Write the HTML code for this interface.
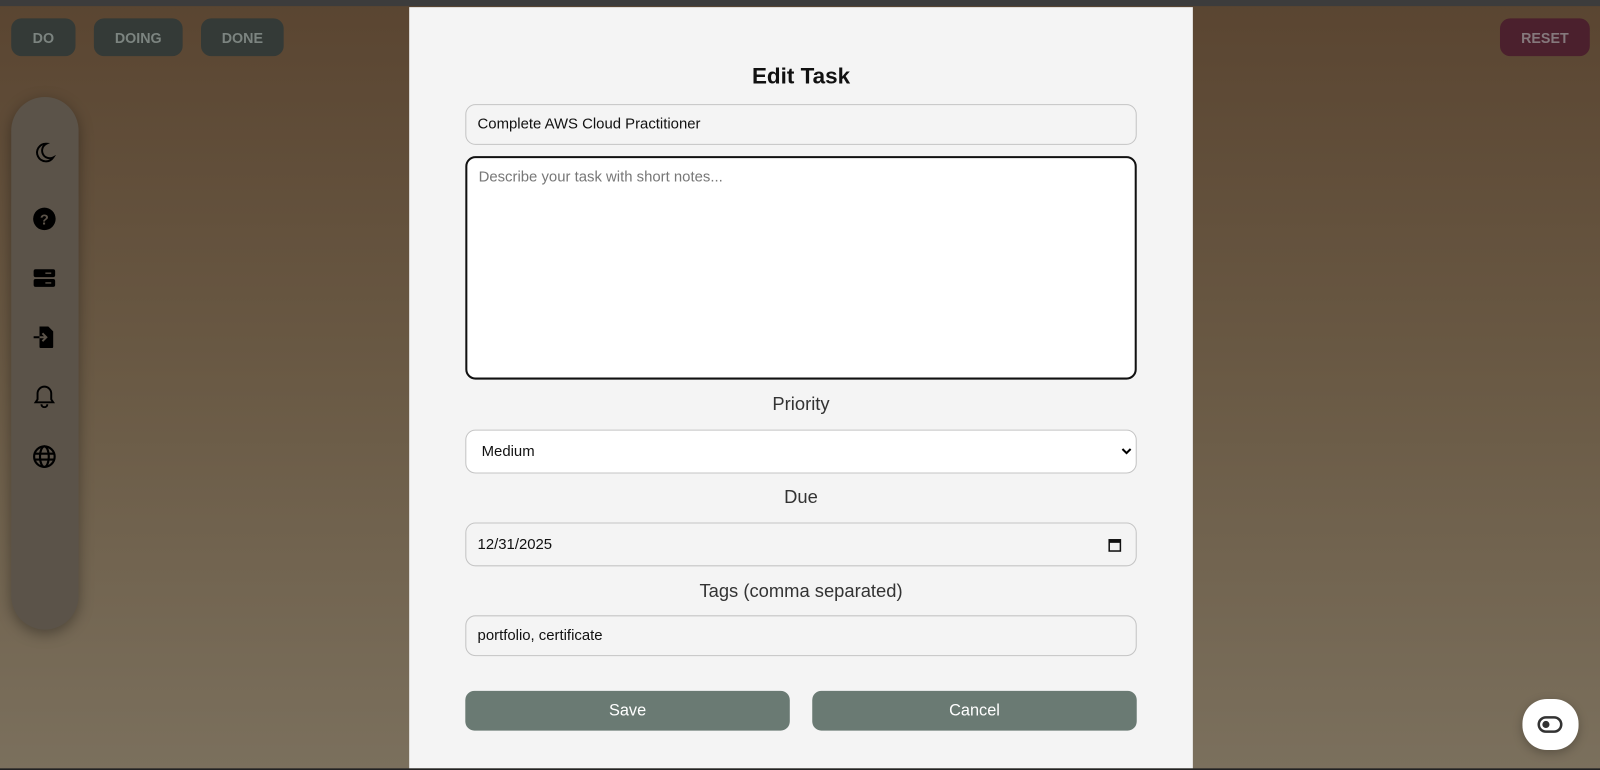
<!DOCTYPE html>
<html><head><meta charset="utf-8"><style>
*{box-sizing:border-box;margin:0;padding:0}
html,body{width:1600px;height:770px;overflow:hidden}
body{font-family:"Liberation Sans",Arial,sans-serif;background:linear-gradient(#5a4531,#6a5a45 50%,#7b705d);position:relative}
#w{position:absolute;left:0;top:0;width:1568px;height:755px;transform:scale(1.020408);transform-origin:0 0}
.topbar{position:absolute;left:0;top:0;width:1568px;height:6px;background:#3c3c3c}
.botbar{position:absolute;left:0;top:753px;width:1568px;height:2px;background:#222}
.tb{position:absolute;top:18px;height:37px;border-radius:10px;background:#343a37;color:#7c8480;font-weight:bold;font-size:14px;display:flex;align-items:center;justify-content:center}
.side{position:absolute;left:11px;top:95px;width:66px;height:522px;border-radius:33px;background:#5b5349;box-shadow:0 4px 14px rgba(0,0,0,.35)}
.side svg{position:absolute;left:21px;width:23px;height:23px}
.modal{position:absolute;left:401px;top:7px;width:768px;height:746px;background:#f4f4f4}
h2{position:absolute;top:55px;width:100%;text-align:center;font-size:22px;font-weight:bold;color:#111}
.in{position:absolute;left:55px;width:658px;border:1px solid #c4c4c4;border-radius:10px;background:#f4f4f4;font-size:14.6px;color:#111;padding-left:11px;display:flex;align-items:center}
.lbl{position:absolute;width:100%;text-align:center;font-size:18px;color:#333}
.btn{position:absolute;top:670px;width:318px;height:39px;border-radius:9px;background:#6a7a73;color:#fff;font-size:16px;display:flex;align-items:center;justify-content:center}
</style></head><body><div id="w">
<div class="topbar"></div>
<div class="tb" style="left:11px;width:63px">DO</div>
<div class="tb" style="left:92px;width:87px">DOING</div>
<div class="tb" style="left:197px;width:81px">DONE</div>
<div class="tb" style="left:1470px;width:88px;background:#4b202d;color:#85787c">RESET</div>
<div class="side">
<svg style="top:43px" viewBox="0 0 24 24"><path d="M14 3a9 9 0 1 0 7 14a7.5 7.5 0 0 1-7-14z" fill="none" stroke="#000" stroke-width="2"/></svg>
<svg style="top:108px" viewBox="0 0 24 24"><circle cx="12" cy="12" r="11.5" fill="#000"/><text x="12" y="17.5" text-anchor="middle" font-size="15" font-weight="bold" fill="#5b5349" font-family="Liberation Sans">?</text></svg>
<svg style="top:166px" viewBox="0 0 24 24"><rect x="1" y="3" width="22" height="8" rx="2" fill="#000"/><rect x="1" y="13" width="22" height="8" rx="2" fill="#000"/><path d="M13 7h6M13 17h6" stroke="#5b5349" stroke-width="1.5"/></svg>
<svg style="top:224px" viewBox="0 0 24 24"><path d="M7 1h9l5 5v16a1 1 0 0 1-1 1H8a1 1 0 0 1-1-1z" fill="#000"/><path d="M1 12h13M10 8l4 4-4 4" stroke="#5b5349" stroke-width="2" fill="none"/><path d="M1 12h6" stroke="#000" stroke-width="2"/></svg>
<svg style="top:282px" viewBox="0 0 24 24"><path d="M12 2a7 7 0 0 0-7 7v6l-2 3h18l-2-3V9a7 7 0 0 0-7-7zM9 20a3 3 0 0 0 6 0" fill="none" stroke="#000" stroke-width="2"/></svg>
<svg style="top:341px" viewBox="0 0 24 24"><circle cx="12" cy="12" r="10.5" fill="none" stroke="#000" stroke-width="2.2"/><ellipse cx="12" cy="12" rx="4.5" ry="10.5" fill="none" stroke="#000" stroke-width="2.2"/><path d="M2 9h20M2 15h20" stroke="#000" stroke-width="2.2"/></svg>
</div>
<div class="modal">
<h2>Edit Task</h2>
<div class="in" style="top:95px;height:40px">Complete AWS Cloud Practitioner</div>
<div class="in" style="top:146px;height:219px;border:2px solid #111;background:#fff;align-items:flex-start;padding-top:11px;color:#777">Describe your task with short notes...</div>
<div class="lbl" style="top:379px">Priority</div>
<div class="in" style="top:414px;height:43px;background:#fff;padding-left:15px">Medium<svg style="position:absolute;right:4px;top:16px" width="10" height="8" viewBox="0 0 10 8"><path d="M1 2l4 4 4-4" stroke="#000" stroke-width="2" fill="none"/></svg></div>
<div class="lbl" style="top:470px">Due</div>
<div class="in" style="top:505px;height:43px">12/31/2025<svg style="position:absolute;right:14px;top:14px" width="13" height="14" viewBox="0 0 13 14"><rect x="1" y="2" width="11" height="11" fill="none" stroke="#111" stroke-width="1.5"/><rect x="1" y="2" width="11" height="3" fill="#111"/></svg></div>
<div class="lbl" style="top:562px">Tags (comma separated)</div>
<div class="in" style="top:596px;height:40px">portfolio, certificate</div>
<div class="btn" style="left:55px">Save</div>
<div class="btn" style="left:395px">Cancel</div>
</div>
<div style="position:absolute;left:1492px;top:685px;width:55px;height:50px;border-radius:24px;background:#fff;box-shadow:0 3px 10px rgba(0,0,0,.25)"><svg style="position:absolute;left:14px;top:13px" width="26" height="24" viewBox="0 0 26 24"><rect x="2" y="5" width="22" height="14" rx="7" fill="none" stroke="#333" stroke-width="2.5"/><circle cx="9" cy="12" r="3.5" fill="#333"/></svg></div>
<div class="botbar"></div>
</div></body></html>
